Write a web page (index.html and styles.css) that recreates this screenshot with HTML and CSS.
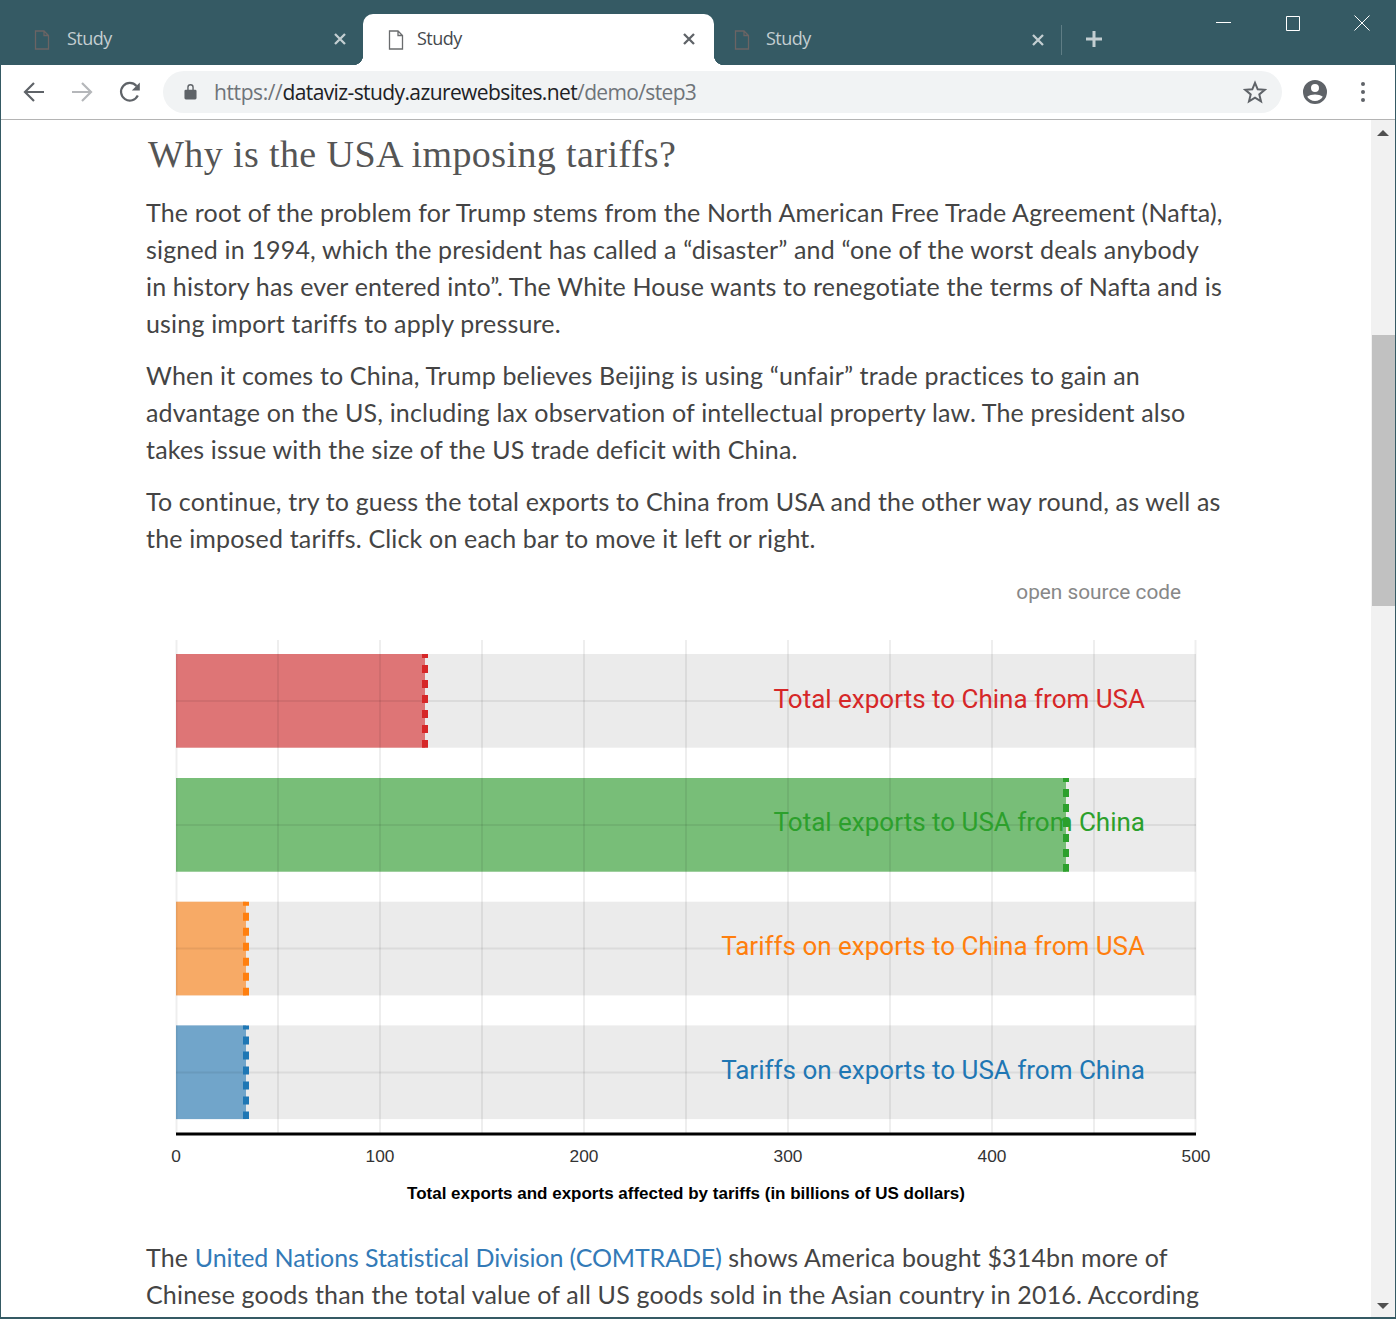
FILE: index.html
```html
<!DOCTYPE html>
<html lang="en">
<head>
    <meta charset="UTF-8">
    <title>Study</title>
    <link rel="stylesheet" href="styles.css">
</head>
<body>
    <div class="window">
        <div class="tabstrip">
            <div class="tab tab-first">
                <svg class="tab-icon" viewBox="0 0 16 20"><path d="M1.500 1h8.500l4.500 4.500v13.500h-13z M10 1v4.500h4.500"/></svg>
                <span class="tab-title">Study</span>
                <svg class="tab-close" viewBox="0 0 14 14"><path d="M2 2l10 10M12 2l-10 10"/></svg>
            </div>
            <div class="tab tab-active">
                <svg class="tab-icon" viewBox="0 0 16 20"><path d="M1.500 1h8.500l4.500 4.500v13.500h-13z M10 1v4.500h4.500"/></svg>
                <span class="tab-title">Study</span>
                <svg class="tab-close" viewBox="0 0 14 14"><path d="M2 2l10 10M12 2l-10 10"/></svg>
            </div>
            <div class="tab tab-last">
                <svg class="tab-icon" viewBox="0 0 16 20"><path d="M1.500 1h8.500l4.500 4.500v13.500h-13z M10 1v4.500h4.500"/></svg>
                <span class="tab-title">Study</span>
                <svg class="tab-close" viewBox="0 0 14 14"><path d="M2 2l10 10M12 2l-10 10"/></svg>
            </div>
            <svg class="new-tab" viewBox="0 0 18 18"><path d="M9 1v16M1 9h16"/></svg>
            <div class="window-controls">
                <svg viewBox="0 0 16 16"><path d="M0 7.500h15"/></svg>
                <svg viewBox="0 0 16 16"><path d="M1.500 1.500h13v14h-13z"/></svg>
                <svg viewBox="0 0 16 16"><path d="M.5.500l15 15M15.500.500l-15 15"/></svg>
            </div>
        </div>

        <div class="toolbar">
            <svg class="tool back" viewBox="0 0 24 24"><path d="M22 12H3M12 3l-9 9 9 9"/></svg>
            <svg class="tool forward" viewBox="0 0 24 24"><path d="M2 12h19M12 3l9 9-9 9"/></svg>
            <svg class="tool reload" viewBox="0 0 24 24"><path d="M19.800 15.500A8.800 8.800 0 1 1 18.500 6"/><path class="solid" d="M21.800 2.500v8h-8z"/></svg>
            <div class="omnibox">
                <svg class="lock" viewBox="0 0 14 18"><path d="M2 7h10a1.500 1.500 0 0 1 1.500 1.500v7.500a1.500 1.500 0 0 1-1.500 1.500H2A1.500 1.500 0 0 1 .5 16V8.500A1.500 1.500 0 0 1 2 7zM3.500 7V4.500a3.500 3.500 0 0 1 7 0V7H9V4.500a2 2 0 0 0-4 0V7z"/></svg>
                <span class="url"><span class="url-dim">https://</span><span class="url-host">dataviz-study.azurewebsites.net</span><span class="url-dim url-path">/demo/step3</span></span>
                <svg class="star" viewBox="0 0 24 24"><path d="M12 2.800l2.700 6.500 7 .500-5.400 4.600 1.700 6.900-6-3.700-6 3.700 1.700-6.900-5.400-4.600 7-.500z"/></svg>
            </div>
            <svg class="avatar" viewBox="0 0 24 24"><path fill-rule="evenodd" d="M12 0a12 12 0 1 0 0 24 12 12 0 0 0 0-24zm0 4a4 4 0 1 1 0 8 4 4 0 0 1 0-8zm0 17c-3.300 0-6.200-1.700-7.800-4.200 1.900-1.500 5-2.300 7.800-2.300s5.900.800 7.800 2.300C18.200 19.300 15.300 21 12 21z"/></svg>
            <div class="menu-dots"><i></i><i></i><i></i></div>
        </div>

        <div class="viewport">
            <main class="article">
                <h2>Why is the USA imposing tariffs?</h2>
                <p>The root of the problem for Trump stems from the North American Free Trade Agreement (Nafta), signed in 1994, which the president has called a “disaster” and “one of the worst deals anybody in history has ever entered into”. The White House wants to renegotiate the terms of Nafta and is using import tariffs to apply pressure.</p>
                <p>When it comes to China, Trump believes Beijing is using “unfair” trade practices to gain an advantage on the US, including lax observation of intellectual property law. The president also takes issue with the size of the US trade deficit with China.</p>
                <p>To continue, try to guess the total exports to China from USA and the other way round, as well as the imposed tariffs. Click on each bar to move it left or right.</p>
                <div class="source-link">open source code</div>

                <svg class="chart" viewBox="146 630 1077 590" width="1077" height="590">
                    <g class="bands">
                        <rect x="176" y="654" width="1020" height="93.700"/>
                        <rect x="176" y="778" width="1020" height="93.700"/>
                        <rect x="176" y="901.700" width="1020" height="93.700"/>
                        <rect x="176" y="1025.400" width="1020" height="93.700"/>
                    </g>
                    <rect class="bar red" x="176" y="654" width="249" height="93.700"/>
                    <rect class="bar green" x="176" y="778" width="890" height="93.700"/>
                    <rect class="bar orange" x="176" y="901.700" width="70" height="93.700"/>
                    <rect class="bar blue" x="176" y="1025.400" width="70" height="93.700"/>
                    <g class="grid">
                        <path d="M176.500 640v493M278 640v493M380 640v493M482 640v493M584 640v493M686 640v493M788 640v493M890 640v493M992 640v493M1094 640v493M1195.500 640v493"/>
                        <path d="M176 701h1020M176 825h1020M176 948.500h1020M176 1072.500h1020"/>
                    </g>
                    <path class="guess red-line" d="M425 654v93.700"/>
                    <path class="guess green-line" d="M1066 778v93.700"/>
                    <path class="guess orange-line" d="M246 901.700v93.700"/>
                    <path class="guess blue-line" d="M246 1025.400v93.700"/>
                    <text class="bar-label red-text" x="1145" y="708">Total exports to China from USA</text>
                    <text class="bar-label green-text" x="1145" y="831">Total exports to USA from China</text>
                    <text class="bar-label orange-text" x="1145" y="955">Tariffs on exports to China from USA</text>
                    <text class="bar-label blue-text" x="1145" y="1079">Tariffs on exports to USA from China</text>
                    <path class="axis" d="M176 1134h1020"/>
                    <g class="ticks">
                        <text x="176" y="1162">0</text>
                        <text x="380" y="1162">100</text>
                        <text x="584" y="1162">200</text>
                        <text x="788" y="1162">300</text>
                        <text x="992" y="1162">400</text>
                        <text x="1196" y="1162">500</text>
                    </g>
                    <text class="axis-title" x="686" y="1199">Total exports and exports affected by tariffs (in billions of US dollars)</text>
                </svg>

                <p>The <a href="#">United Nations Statistical Division (COMTRADE)</a> shows America bought $314bn more of Chinese goods than the total value of all US goods sold in the Asian country in 2016. According</p>
            </main>
            <div class="scrollbar">
                <div class="arrow-up"></div>
                <div class="thumb"></div>
                <div class="arrow-down"></div>
            </div>
        </div>
    </div>
</body>
</html>
```

FILE: styles.css
```css
/* styles.css */
html, body {
    margin: 0;
    padding: 0;
    height: 100%;
    overflow: hidden;
    background-color: white;
}
.window {
    height: 100vh;
    box-sizing: border-box;
    border: 1px solid #355a64;
    border-bottom-width: 2px;
    display: flex;
    flex-direction: column;
    overflow: hidden;
}

/* tabs */
.tabstrip {
    height: 64px;
    flex: none;
    background-color: #355a64;
    display: flex;
    align-items: flex-end;
    position: relative;
    font-family: 'Open Sans', sans-serif;
}
.tab {
    height: 51px;
    display: flex;
    align-items: center;
    box-sizing: border-box;
    position: relative;
    color: #c3ced1;
}
.tab-first {
    width: 362px;
    padding-left: 33px;
}
.tab-active {
    width: 351px;
    padding-left: 25px;
    background-color: white;
    color: #45494d;
    border-radius: 10px 10px 0 0;
}
.tab-active::before, .tab-active::after {
    content: "";
    position: absolute;
    bottom: 0;
    width: 10px;
    height: 10px;
}
.tab-active::before {
    left: -10px;
    background: radial-gradient(circle at 0 0, #355a64 10px, white 10.500px);
}
.tab-active::after {
    right: -10px;
    background: radial-gradient(circle at 100% 0, #355a64 10px, white 10.500px);
}
.tab-last {
    width: 348px;
    padding-left: 20px;
    border-right: 1px solid #5f7d85;
    height: 30px;
    margin-bottom: 10px;
}
.tab-icon {
    width: 16px;
    height: 20px;
    fill: none;
    stroke: #5d5f5f;
    stroke-width: 1.300;
}
.tab-active .tab-icon {
    stroke: #6a6c6e;
}
.tab-first .tab-icon, .tab-last .tab-icon {
    stroke: #6b6464;
}
.tab-title {
    margin: 0 0 4px 13px;
    font-size: 18px;
    letter-spacing: -0.500px;
}
.tab-first .tab-title {
    margin-left: 17px;
}
.tab-last .tab-title {
    margin-left: 16px;
}
.tab-close {
    margin-left: auto;
    margin-right: 16px;
    margin-bottom: 1px;
    width: 14px;
    height: 14px;
    fill: none;
    stroke: currentColor;
    stroke-width: 2.300;
}
.tab-active .tab-close {
    margin-right: 18px;
    stroke: #5f6368;
}
.tab-last .tab-close {
    margin-right: 16px;
}
.new-tab {
    width: 18px;
    height: 18px;
    margin: 0 0 17px 23px;
    fill: none;
    stroke: #c3ced1;
    stroke-width: 3;
}
.window-controls {
    position: absolute;
    top: 14px;
    right: 25px;
    display: flex;
    gap: 53px;
}
.window-controls svg {
    width: 16px;
    height: 16px;
    fill: none;
    stroke: white;
    stroke-width: 1;
}

/* toolbar */
.toolbar {
    height: 55px;
    flex: none;
    box-sizing: border-box;
    border-bottom: 1px solid #b4b4b4;
    display: flex;
    align-items: center;
    background-color: white;
    padding-bottom: 1px;
}
.tool {
    width: 24px;
    height: 24px;
    fill: none;
    stroke: #5f6368;
    stroke-width: 2.200;
}
.tool .solid {
    fill: #5f6368;
    stroke: none;
}
.back {
    margin-left: 21px;
}
.forward {
    margin-left: 24px;
    stroke: #b5b7ba;
}
.reload {
    margin-left: 24px;
}
.omnibox {
    margin-left: 21px;
    width: 1119px;
    height: 42px;
    border-radius: 21px;
    background-color: #f1f3f4;
    display: flex;
    align-items: center;
    padding-left: 21px;
    box-sizing: border-box;
}
.lock {
    width: 13px;
    height: 17px;
    fill: #5f6368;
}
.url {
    margin-left: 17px;
    font-family: 'Open Sans', sans-serif;
    font-size: 21px;
    color: #202124;
    letter-spacing: -0.400px;
}
.url-host {
    letter-spacing: -0.600px;
}
.url-dim {
    color: #6f7479;
}
.url-path {
    letter-spacing: -0.650px;
}
.star {
    margin-left: auto;
    margin-right: 15px;
    width: 24px;
    height: 24px;
    fill: none;
    stroke: #5f6368;
    stroke-width: 2;
}
.avatar {
    width: 24px;
    height: 24px;
    margin-left: 21px;
    fill: #5f6368;
}
.menu-dots {
    margin-left: 34px;
    display: flex;
    flex-direction: column;
    gap: 4px;
}
.menu-dots i {
    display: block;
    width: 4px;
    height: 4px;
    border-radius: 50%;
    background-color: #5f6368;
}

/* page */
.viewport {
    flex: 1;
    min-height: 0;
    display: flex;
    overflow: hidden;
}
.article {
    flex: 1;
    padding: 0 148px 0 145px;
    font-family: Lato, sans-serif;
    font-size: 25px;
    letter-spacing: 0.170px;
    line-height: 37px;
    color: #444;
}
h2 {
    margin: 9px 0 15px 2px;
    font-family: 'Liberation Serif', serif;
    font-weight: normal;
    font-size: 38px;
    line-height: 50px;
    letter-spacing: 0.400px;
    color: #555;
}
p {
    margin: 0 0 15px;
}
a {
    color: #337ab7;
    text-decoration: none;
    letter-spacing: -0.100px;
}
.source-link {
    margin: 20px 42px 0 0;
    text-align: right;
    font-family: Roboto, sans-serif;
    font-size: 20.800px;
    letter-spacing: 0;
    line-height: 30px;
    color: #888;
}
.chart {
    display: block;
    margin: 23px 0 19px;
}

/* chart */
.bands rect {
    fill: #ebebeb;
}
.bar {
    fill-opacity: 0.6;
}
.bar.red {
    fill: #d62728;
}
.bar.green {
    fill: #2ca02c;
}
.bar.orange {
    fill: #ff7f0e;
}
.bar.blue {
    fill: #1f77b4;
}
.grid path {
    fill: none;
    stroke: #000;
    stroke-opacity: 0.065;
    stroke-width: 2;
}
.guess {
    fill: none;
    stroke-width: 6;
    stroke-dasharray: 8 7;
    stroke-dashoffset: 4;
}
.red-line {
    stroke: #d62728;
}
.green-line {
    stroke: #2ca02c;
}
.orange-line {
    stroke: #ff7f0e;
}
.blue-line {
    stroke: #1f77b4;
}
.bar-label {
    font-family: Roboto, sans-serif;
    font-size: 26px;
    letter-spacing: 0;
    text-anchor: end;
}
.red-text {
    fill: #d62728;
}
.green-text {
    fill: #2ca02c;
}
.orange-text {
    fill: #ff7f0e;
}
.blue-text {
    fill: #1f77b4;
}
.axis {
    stroke: #000;
    stroke-width: 3;
}
.ticks text {
    font-family: 'Liberation Sans', sans-serif;
    font-size: 17.300px;
    letter-spacing: 0;
    text-anchor: middle;
    fill: #333;
}
.axis-title {
    font-family: 'Liberation Sans', sans-serif;
    font-size: 17px;
    letter-spacing: 0;
    font-weight: bold;
    text-anchor: middle;
    fill: #000;
}

/* scrollbar */
.scrollbar {
    width: 24px;
    flex: none;
    background-color: #f1f1f1;
    position: relative;
}
.thumb {
    position: absolute;
    top: 215px;
    left: 1px;
    right: 0;
    height: 271px;
    background-color: #c1c1c1;
}
.arrow-up, .arrow-down {
    position: absolute;
    left: 6px;
    width: 0;
    height: 0;
    border-left: 6px solid transparent;
    border-right: 6px solid transparent;
}
.arrow-up {
    top: 10px;
    border-bottom: 6px solid #505050;
}
.arrow-down {
    bottom: 8px;
    border-top: 6px solid #505050;
}
```
